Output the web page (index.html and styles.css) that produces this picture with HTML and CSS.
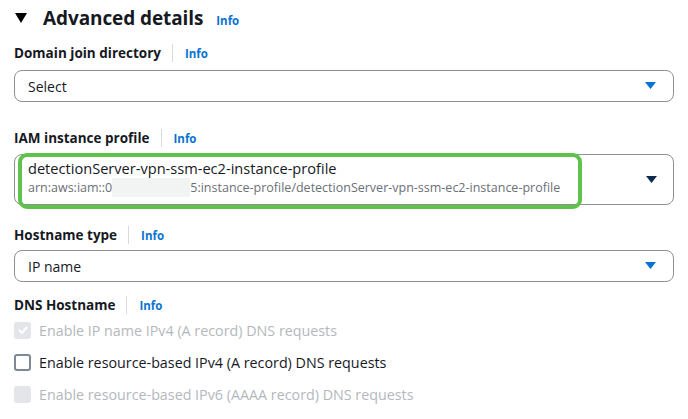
FILE: index.html
```html
<!DOCTYPE html>
<html>
<head>
<meta charset="utf-8">
<link rel="stylesheet" href="styles.css">
</head>
<body>
<div class="page">
  <div class="section-head">
    <svg class="caret" width="12" height="10" viewBox="0 0 12 10"><path d="M0 0 H12 L6 10 Z" fill="#000"/></svg>
    <h2 class="title">Advanced details</h2>
    <a class="info info-head">Info</a>
  </div>

  <div class="field f-domain">
    <div class="label-row"><span class="label">Domain join directory</span><span class="sep"></span><a class="info">Info</a></div>
    <div class="select">
      <span class="value">Select</span>
      <svg class="arrow" width="11" height="8" viewBox="0 0 11 8"><path d="M0 0 H11 L5.5 7 Z" fill="#0972d3"/></svg>
    </div>
  </div>

  <div class="field f-iam">
    <div class="label-row"><span class="label">IAM instance profile</span><span class="sep"></span><a class="info">Info</a></div>
    <div class="select tall">
      <div class="two-line">
        <span class="value">detectionServer-vpn-ssm-ec2-instance-profile</span>
        <span class="sub">arn:aws:iam::0<span class="redact"></span>5:instance-profile/detectionServer-vpn-ssm-ec2-instance-profile</span>
      </div>
      <svg class="arrow" width="11" height="8" viewBox="0 0 11 8"><path d="M0 0 H11 L5.5 7 Z" fill="#0f2a4f"/></svg>
      <div class="highlight"></div>
    </div>
  </div>

  <div class="field f-host">
    <div class="label-row"><span class="label">Hostname type</span><span class="sep"></span><a class="info">Info</a></div>
    <div class="select">
      <span class="value">IP name</span>
      <svg class="arrow" width="11" height="8" viewBox="0 0 11 8"><path d="M0 0 H11 L5.5 7 Z" fill="#0972d3"/></svg>
    </div>
  </div>

  <div class="field f-dns">
    <div class="label-row"><span class="label">DNS Hostname</span><span class="sep"></span><a class="info">Info</a></div>
    <div class="checks">
      <label class="check disabled">
        <span class="box checked"><svg width="12" height="10" viewBox="0 0 12 10"><path d="M2 5 L5 8 L10 2" fill="none" stroke="#fff" stroke-width="2"/></svg></span>
        <span>Enable IP name IPv4 (A record) DNS requests</span>
      </label>
      <label class="check">
        <span class="box"></span>
        <span>Enable resource-based IPv4 (A record) DNS requests</span>
      </label>
      <label class="check disabled">
        <span class="box"></span>
        <span>Enable resource-based IPv6 (AAAA record) DNS requests</span>
      </label>
    </div>
  </div>
</div>
</body>
</html>
```

FILE: styles.css
```css
* { box-sizing: border-box; }
html, body { margin: 0; padding: 0; background: #fff; }
body { font-family: "Open Sans", "Noto Sans", sans-serif; color: #16191f; }
.page { padding: 4px 14px 0 14px; width: 688px; }

.section-head { display: flex; align-items: center; height: 28px; }
.caret { margin-left: 1px; margin-right: 16px; }
.title { margin: 0; font-size: 19px; font-weight: 700; line-height: 28px; letter-spacing: -0.1px; }
.info { color: #0972d3; font-weight: 700; font-size: 11.5px; text-decoration: none; }
.info-head { margin-left: 13px; margin-top: 4px; }

.field { display: flex; flex-direction: column; }
.f-domain { margin-top: 11px; }
.f-iam { margin-top: 26px; }
.f-host { margin-top: 20px; }
.f-dns { margin-top: 13px; }

.label-row { display: flex; align-items: center; height: 20px; }
.label { font-size: 13.5px; font-weight: 700; }
.sep { width: 1px; height: 18px; background: #d5dbdb; margin: 0 12px 0 11px; }

.select { position: relative; display: flex; align-items: center; height: 32px; width: 660px; border: 1.5px solid #8d9096; border-radius: 8px; padding: 0 17px 0 13px; margin-top: 7px; }
.select .value { flex: 1; font-size: 14px; }
.f-host .select { margin-top: 5px; }
.select.tall { height: 51px; margin-top: 6px; padding-right: 16px; }
.two-line { flex: 1; display: flex; flex-direction: column; }
.two-line .value { font-size: 14.6px; line-height: 20px; margin-top: -4px; }
.sub { font-size: 12.5px; color: #6b7078; line-height: 16px; position: relative; white-space: nowrap; }
.redact { display: inline-block; width: 78px; height: 19px; background: #f2f3f3; vertical-align: -5px; }
.highlight { position: absolute; left: 3px; top: -2px; width: 564px; height: 56px; border: 4px solid #5ec24b; border-radius: 9px; pointer-events: none; }

.checks { display: flex; flex-direction: column; gap: 12px; margin-top: 5px; }
.check { display: flex; align-items: center; height: 20px; font-size: 14.3px; color: #16191f; }
.check.disabled { color: #b4b8bd; }
.box { width: 17px; height: 17px; border: 2px solid #7d8998; border-radius: 3px; margin-right: 8px; display: flex; align-items: center; justify-content: center; }
.check.disabled .box { border: none; background: #e3e5e8; }
```
